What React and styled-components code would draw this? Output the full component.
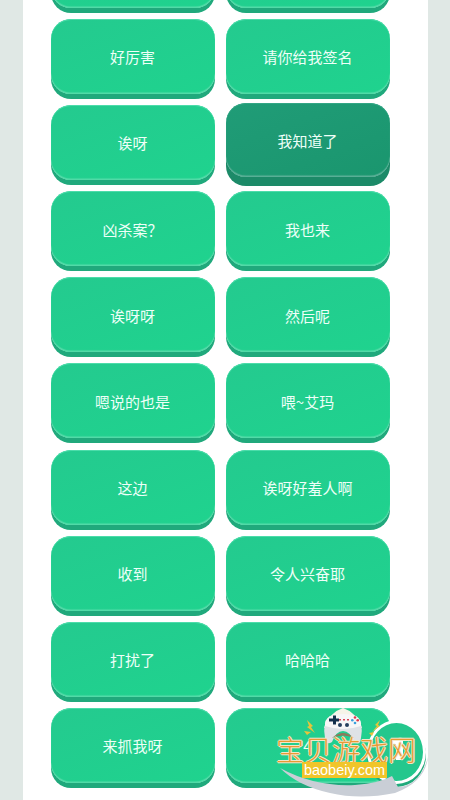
import React from "react";
import styled, { createGlobalStyle } from "styled-components";

const Global = createGlobalStyle`
  html, body { margin: 0; padding: 0; height: 800px; overflow: hidden; background: #e0e8e5; }
  #root { height: 800px; }
`;
const Page = styled.div`
  position: relative;
  width: 450px;
  height: 800px;
  overflow: hidden;
  padding: 0 22px 0 23px;
  box-sizing: border-box;
  font-family: "Noto Sans CJK SC", "Noto Sans", sans-serif;
`;
const Panel = styled.main`
  height: 800px;
  background: #fff;
  overflow: hidden;
`;
const Grid = styled.div`
  display: grid;
  grid-template-columns: 164px 164px;
  grid-auto-rows: 75px;
  column-gap: 11px;
  row-gap: 11.15px;
  margin: -67.3px 0 0 28px;
`;
const Key = styled.button`
  position: relative;
  box-sizing: border-box;
  border: 0;
  padding: 1px 1px 0 0;
  border-radius: 20px;
  color: #eefff8;
  font: 400 15px "Noto Sans CJK SC", sans-serif;
  height: ${p => (p.$on ? "74px" : "75px")};
  transform: ${p => (p.$on ? "translateY(-2px)" : "none")};
  background: ${p => (p.$on ? "linear-gradient(160deg,#209c77,#1a966e)" : "linear-gradient(160deg,#24ca8f,#1fd38e)")};
  box-shadow: ${p =>
    p.$on
      ? "inset 0 1px 0 #33a685, inset 0 -1.5px 1px #5cb098, 0 9px 0 #1c8a68"
      : "inset 0 1px 0 #4cdcaa, inset 0 -1.5px 1px #55dba9, 0 5px 0 #20a97c"};
`;
const Fab = styled.div`
  position: absolute;
  left: 367px;
  top: 720px;
  width: 59px;
  height: 64px;
  box-sizing: border-box;
  border-radius: 50%;
  background: #24c78d;
  border: 3px solid #fff;
  box-shadow: 0 3px 0 #21a97b;
`;
const Mark = styled.div`
  position: absolute;
  left: 270px;
  top: 700px;
  width: 160px;
  height: 100px;
`;
const Brand = styled.div`
  position: absolute;
  left: 6px;
  top: 32px;
  width: 140px;
  font: 300 28px/34px "Noto Sans CJK SC", sans-serif;
  white-space: nowrap;
  color: #e79a34;
  text-shadow: 1px 0 0 #f3e7c8, -1px 0 0 #f3e7c8, 0 1px 0 #f3e7c8, 0 -1px 0 #f3e7c8;
`;
const Domain = styled.div`
  position: absolute;
  left: 32px;
  top: 62px;
  width: 85px;
  height: 16px;
  background: #f1c52a;
  color: #fff;
  font: 400 14.5px/16px "Liberation Sans", sans-serif;
  text-align: center;
  white-space: nowrap;
`;
const Art = styled.svg`
  position: absolute;
  inset: 0;
  width: 160px;
  height: 100px;
`;

const rows = [
  ["", ""], ["好厉害", "请你给我签名"], ["诶呀", "我知道了"], ["凶杀案？", "我也来"], ["诶呀呀", "然后呢"],
  ["嗯说的也是", "喂~艾玛"], ["这边", "诶呀好羞人啊"], ["收到", "令人兴奋耶"], ["打扰了", "哈哈哈"], ["来抓我呀", "4"],
];

export default function App() {
  return (
    <Page>
      <Global />
      <Panel>
        <Grid>
          {rows.flat().map((t, i) => <Key key={i} $on={t === "我知道了"}>{t}</Key>)}
        </Grid>
      </Panel>
      <Fab />
      <Mark>
        <Art viewBox="0 0 160 100">
          <path d="M10 68 Q45 87 85 85 Q110 83 122 76 L128 87 Q150 86 158 57 Q155 82 125 93 Q90 100 60 93 Q28 86 10 68Z" fill="#c9ced6" />
          <path d="M122 40 Q127 37 133 38 L133 60 H126 V44 Q124 44 122 45Z" fill="#fff" />
          <path d="M54 28 Q60 12 73 8 Q86 12 92 28 Z" fill="#f6f4e8" />
          <path d="M55 38 Q52 24 60 16 H86 Q94 24 91 38 Q90 46 84 42 Q80 31 73 31 Q66 31 62 42 Q56 46 55 38Z" fill="#dfe2e6" />
          <path d="M60 16 Q73 12 86 16 Q92 20 91 26 Q73 32 55 26 Q54 20 60 16Z" fill="#f7f7f7" />
          <path d="M60 18.500h4v-3h3v3h3v3h-3v3h-3v-3h-4z" fill="#14304c" transform="translate(-1 0)" />
          <circle cx="85" cy="17.500" r="1.300" fill="#e0394a" /><circle cx="85" cy="23" r="1.300" fill="#3aa0dc" />
          <circle cx="82.300" cy="20.200" r="1.300" fill="#3aa0dc" /><circle cx="87.700" cy="20.200" r="1.300" fill="#e0394a" />
          <circle cx="70" cy="25" r="2" fill="#26405f" /><circle cx="77" cy="25" r="2" fill="#26405f" />
          <path d="M69 19h2v1.500h-2zM73 19h2v1.500h-2zM77 19h2v1.500h-2z" fill="#d94255" />
          <path d="M62 38 Q73 28 84 38 Q73 33 62 38Z" fill="#8a7a5c" />
          <path d="M37 20l6 6-2 1 4 6-8-6 2-1z M34 31l7 1-4 3z" fill="#e8c43a" />
          <path d="M110 20l-5 5 2 1-5 6 8-6-2-1z M104 32l-5 1 3 3z" fill="#e8c43a" />
        </Art>
        <Brand>宝贝游戏网</Brand>
        <Domain>baobeiy.com</Domain>
      </Mark>
    </Page>
  );
}
